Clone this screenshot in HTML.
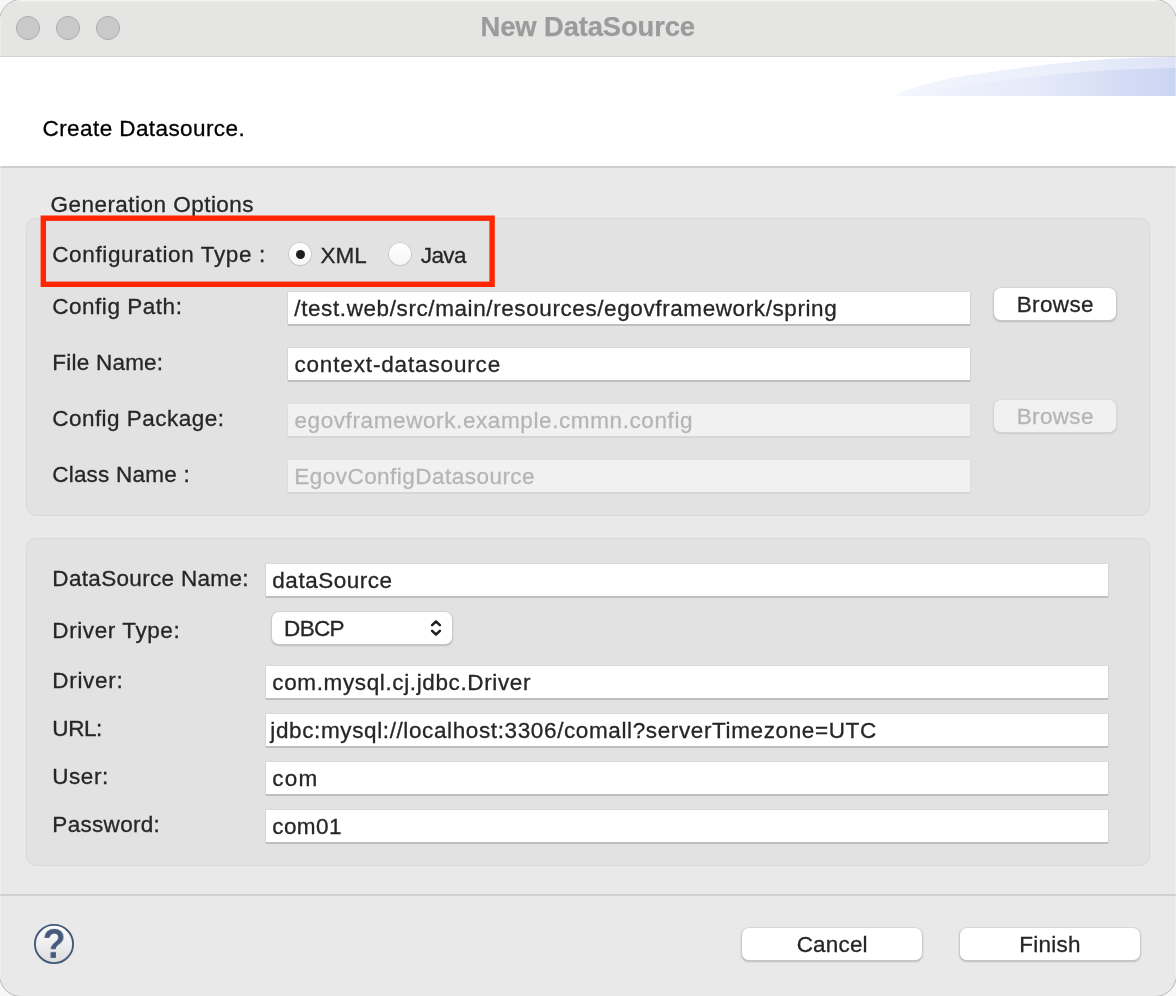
<!DOCTYPE html>
<html lang="en">
<head>
<meta charset="utf-8">
<title>New DataSource</title>
<style>
html,body{margin:0;padding:0}
body{width:1176px;height:996px;overflow:hidden;background:#f7f7f7;position:relative;font-family:"Liberation Sans",sans-serif}
.win{position:absolute;left:-1px;top:-1px;width:1176px;height:996px;border:1px solid #b9b9b9;border-radius:22px;overflow:hidden;background:#e9e9e9}
.in{position:absolute;left:0;top:0;width:1176px;height:996px;will-change:transform}
.tb{position:absolute;left:0;top:0;width:1176px;height:56px;background:#e5e5e3;border-bottom:1px solid #d1d1d1;box-shadow:inset 0 1px 0 #f4f4f4,inset 0 2px 0 #ececeb}
.tl{position:absolute;top:16px;width:22px;height:22px;border-radius:50%;background:#c9c9c9;border:1px solid #a9a9a9}
.hdr{position:absolute;left:0;top:57px;width:1176px;height:109px;background:#fff;border-bottom:2px solid #cecece}
.t{position:absolute;font-size:22.5px;line-height:22px;white-space:nowrap;color:#262626;-webkit-text-stroke:0.3px #262626}
.hd{color:#000;-webkit-text-stroke-color:#000}
.dis{color:#b5b5b5;-webkit-text-stroke-color:#b5b5b5}
.ttl{position:absolute;font-size:27.4px;line-height:26px;font-weight:bold;color:#9b9b9b;-webkit-text-stroke:0.25px #9b9b9b;white-space:nowrap}
.grp{position:absolute;left:26px;width:1122px;background:#e2e2e2;border:1px solid #d8d8d8;border-radius:10px}
.fld{position:absolute;background:#fff;box-shadow:0 0 0 0.6px #d4d4d4,0 1.2px 0.6px 0.2px #9e9e9e}
.fd{background:#f1f1f1;box-shadow:0 0 0 0.6px #dcdcdc,0 1.2px 0.6px 0.2px #cccccc}
.btn{position:absolute;background:#fff;border-radius:7px;box-shadow:0 0 0 0.5px #d0d0d0,0 1px 1.5px 0.5px #bdbdbd}
.bd{background:#f1f1f1;box-shadow:0 0 0 0.5px #d9d9d9,0 1px 1.5px 0.3px #cccccc}
.red{z-index:2;position:absolute;left:35px;top:210px}
.rad{position:absolute;top:242.8px;width:22.4px;height:22.4px;border-radius:50%;background:linear-gradient(#fff,#f6f6f6);box-shadow:0 0 0 0.6px #b9b9b9,0 0.8px 1px 0 #c2c2c2}
.dot{position:absolute;left:7.1px;top:7.0px;width:9.2px;height:9.2px;border-radius:50%;background:#1e1e1e}
.edge{position:absolute;top:2px;width:1px;height:994px;background:rgba(255,255,255,0.3)}
.sep{position:absolute;left:0;top:894px;width:1176px;height:2px;background:#d0d0d0}
</style>
</head>
<body>
<div class="win"><div class="in">
<div class="tb"></div>
<div class="tl" style="left:16px"></div><div class="tl" style="left:56px"></div><div class="tl" style="left:96px"></div>
<span class="ttl" style="left:480.61px;top:14px;letter-spacing:-0.132px">New DataSource</span>
<div class="hdr">
<svg width="1176" height="109" style="position:absolute;left:0;top:0">
<defs>
<linearGradient id="g1" x1="0" x2="1" y1="0" y2="0"><stop offset="0" stop-color="#f3f5fd"/><stop offset="0.5" stop-color="#e5eafa"/><stop offset="1" stop-color="#cad4f2"/></linearGradient>
<linearGradient id="g2" x1="0" x2="1" y1="0" y2="0"><stop offset="0" stop-color="#f6f8fe"/><stop offset="0.12" stop-color="#f1f4fd"/><stop offset="0.6" stop-color="#ebeffb"/><stop offset="1" stop-color="#dde3f7"/></linearGradient>
</defs>
<path d="M895.5 39.0 C896.1 38.5 897.3 37.1 899.0 36.2 C900.7 35.3 900.2 35.1 905.5 33.4 C910.8 31.7 922.5 28.0 931.0 25.8 C939.5 23.6 948.0 21.6 956.5 20.0 C965.0 18.4 973.5 17.4 982.0 16.2 C990.5 15.0 999.5 13.9 1007.5 12.8 C1015.5 11.7 1020.6 11.0 1030.0 9.8 C1039.4 8.6 1051.9 7.0 1064.0 5.8 C1076.1 4.6 1089.8 3.2 1102.5 2.4 C1115.2 1.5 1127.8 1.1 1140.0 0.7 C1152.2 0.3 1170.0 0.1 1176.0 0.0 L1176 39 Z" fill="url(#g2)"/>
<path d="M899.0 39.0 C903.3 38.3 915.0 36.2 925.0 34.6 C935.0 33.0 941.5 32.0 959.0 29.6 C976.5 27.2 1006.1 22.6 1030.0 20.0 C1053.9 17.4 1078.2 15.2 1102.5 13.7 C1126.8 12.2 1163.8 11.5 1176.0 11.1 L1176 39 Z" fill="url(#g1)"/>
</svg>
</div>
<div class="grp" style="top:218px;height:296px"></div>
<div class="grp" style="top:538px;height:326px"></div>
<svg class="red" width="480" height="90" viewBox="0 0 480 90"><rect x="8.3" y="8.2" width="448.8" height="66.1" fill="none" stroke="#ff2600" stroke-width="5.4"/></svg>
<div class="rad" style="left:289.0px"><div class="dot"></div></div>
<div class="rad" style="left:388.9px"></div>
<div class="fld" style="left:287.6px;top:291.7px;width:682.8px;height:32.3px"></div>
<div class="fld" style="left:287.6px;top:347.7px;width:682.8px;height:32.3px"></div>
<div class="fld fd" style="left:287.6px;top:403.7px;width:682.8px;height:32.3px"></div>
<div class="fld fd" style="left:287.6px;top:459.7px;width:682.8px;height:32.3px"></div>
<div class="fld" style="left:265.6px;top:563.7px;width:842.8px;height:32.3px"></div>
<div class="fld" style="left:265.6px;top:665.7px;width:842.8px;height:32.3px"></div>
<div class="fld" style="left:265.6px;top:713.7px;width:842.8px;height:32.3px"></div>
<div class="fld" style="left:265.6px;top:761.7px;width:842.8px;height:32.3px"></div>
<div class="fld" style="left:265.6px;top:809.7px;width:842.8px;height:32.3px"></div>
<div class="btn" style="left:994px;top:288px;width:122px;height:32px"></div>
<div class="btn bd" style="left:994px;top:400px;width:122px;height:32px"></div>
<div class="btn" style="left:271.5px;top:611.8px;width:180.6px;height:32px"></div>
<svg style="position:absolute;left:428.3px;top:618px" width="16" height="20" viewBox="0 0 16 20"><path d="M4.1 7.2 L8 3.5 L11.9 7.2 M4.1 12.8 L8 16.5 L11.9 12.8" fill="none" stroke="#1f1f1f" stroke-width="2.45" stroke-linecap="round" stroke-linejoin="round"/></svg>
<div class="btn" style="left:741.5px;top:927.5px;width:180.5px;height:32px"></div>
<div class="btn" style="left:959.5px;top:927.5px;width:180.5px;height:32px"></div>
<div class="sep"></div>
<div class="edge" style="left:0"></div><div class="edge" style="left:1175px"></div>
<svg style="position:absolute;left:33px;top:923px" width="42" height="42" viewBox="0 0 42 42">
<defs><linearGradient id="hg" x1="0" x2="0" y1="0" y2="1"><stop offset="0" stop-color="#ffffff"/><stop offset="1" stop-color="#dcdcdc"/></linearGradient></defs>
<circle cx="21" cy="21" r="19.1" fill="url(#hg)" stroke="#44597b" stroke-width="1.9"/>
<text transform="translate(21 35.1) scale(0.955 1.062)" x="0" y="0" text-anchor="middle" font-family="Liberation Sans, sans-serif" font-weight="bold" font-size="39.5" fill="#44597b">?</text>
</svg>
<span class="t hd" style="left:42.55px;top:118px;letter-spacing:0.415px">Create Datasource.</span>
<span class="t" style="left:50.47px;top:194px;letter-spacing:0.469px">Generation Options</span>
<span class="t" style="left:52.22px;top:244px;letter-spacing:0.637px">Configuration Type :</span>
<span class="t" style="left:320.61px;top:245px;letter-spacing:-0.109px">XML</span>
<span class="t" style="left:420.79px;top:245px;letter-spacing:-0.622px">Java</span>
<span class="t" style="left:52.19px;top:296px;letter-spacing:0.533px">Config Path:</span>
<span class="t" style="left:52.33px;top:352px;letter-spacing:0.219px">File Name:</span>
<span class="t" style="left:52.19px;top:408px;letter-spacing:0.475px">Config Package:</span>
<span class="t" style="left:52.19px;top:464px;letter-spacing:0.225px">Class Name :</span>
<span class="t" style="left:294.33px;top:298px;letter-spacing:0.593px">/test.web/src/main/resources/egovframework/spring</span>
<span class="t" style="left:294.42px;top:354px;letter-spacing:0.851px">context-datasource</span>
<span class="t dis" style="left:294.42px;top:410px;letter-spacing:0.602px">egovframework.example.cmmn.config</span>
<span class="t dis" style="left:294.25px;top:466px;letter-spacing:0.471px">EgovConfigDatasource</span>
<span class="t" style="left:1016.73px;top:294px;letter-spacing:0.357px">Browse</span>
<span class="t dis" style="left:1016.76px;top:406px;letter-spacing:0.336px">Browse</span>
<span class="t" style="left:52.35px;top:568px;letter-spacing:0.322px">DataSource Name:</span>
<span class="t" style="left:52.35px;top:620px;letter-spacing:0.590px">Driver Type:</span>
<span class="t" style="left:52.35px;top:670px;letter-spacing:0.680px">Driver:</span>
<span class="t" style="left:52.34px;top:718px;letter-spacing:-0.439px">URL:</span>
<span class="t" style="left:52.34px;top:766px;letter-spacing:0.512px">User:</span>
<span class="t" style="left:52.35px;top:814px;letter-spacing:0.309px">Password:</span>
<span class="t" style="left:272.34px;top:570px;letter-spacing:0.523px">dataSource</span>
<span class="t" style="left:284.12px;top:618px;letter-spacing:-0.692px">DBCP</span>
<span class="t" style="left:272.30px;top:672px;letter-spacing:0.622px">com.mysql.cj.jdbc.Driver</span>
<span class="t" style="left:270.31px;top:720px;letter-spacing:0.618px">jdbc:mysql://localhost:3306/comall?serverTimezone=UTC</span>
<span class="t" style="left:272.30px;top:768px;letter-spacing:1.171px">com</span>
<span class="t" style="left:272.30px;top:816px;letter-spacing:0.392px">com01</span>
<span class="t" style="left:796.63px;top:934px;letter-spacing:0.191px">Cancel</span>
<span class="t" style="left:1019.25px;top:934px;letter-spacing:0.270px">Finish</span>
</div></div>
</body>
</html>
